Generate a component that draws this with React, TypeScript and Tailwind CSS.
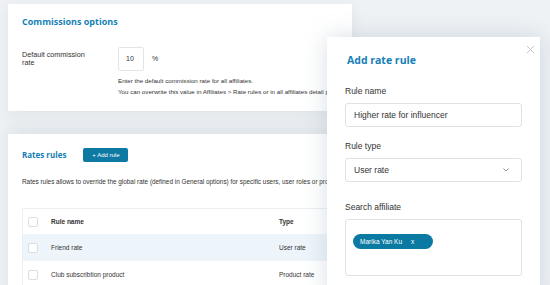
import React from "react";

const sans = "font-['Liberation_Sans',Arial,sans-serif]";
const head = "font-['Open_Sans',sans-serif] font-bold text-[#1580b6]";

type Rule = { name: string; type: string; active?: boolean };

const rules: Rule[] = [
  { name: "Friend rate", type: "User rate", active: true },
  { name: "Club subscribtion product", type: "Product rate" },
];

function Checkbox() {
  return <span className="block w-[10px] h-[10px] rounded-[2px] border border-[#d9dee3] bg-white" />;
}

function CommissionsCard() {
  return (
    <div className="ml-[8px] mt-[4px] w-[344px] h-[107px] bg-white px-[14px] pt-[11px] shadow-[0_4px_14px_rgba(150,165,180,0.18)]">
      <h2 className={`${head} text-[9px] leading-[14px]`}>Commissions options</h2>
      <div className="flex items-start mt-[18px]">
        <p className="w-[96px] pt-[4px] text-[7.2px] leading-[8px] text-[#333]">
          Default commission
          <br />
          rate
        </p>
        <div className="w-[26px] h-[24px] border border-[#e1e5e9] rounded-[2px] flex items-center pl-[7px] text-[7px] text-[#333]">
          10
        </div>
        <span className="ml-[8px] self-center text-[7px] text-[#333]">%</span>
      </div>
      <div className="ml-[96px] mt-[4px] text-[6.2px] leading-[11px] text-[#333] whitespace-nowrap">
        <p>Enter the default commission rate for all affiliates.</p>
        <p>You can overwrite this value in Affiliates &gt; Rate rules or in all affiliates detail page.</p>
      </div>
    </div>
  );
}

function RatesCard() {
  return (
    <div className="ml-[8px] mt-[23px] w-[360px] h-[170px] bg-white px-[14px] pt-[14px] shadow-[0_-6px_16px_rgba(150,165,180,0.2)]">
      <div className="flex items-center">
        <h3 className={`${head} text-[8px] leading-[14px]`}>Rates rules</h3>
        <button className="ml-[17px] w-[45px] h-[14px] rounded-[2px] bg-[#0e7aa3] text-white text-[6px] leading-[14px]">
          + Add rule
        </button>
      </div>
      <p className="mt-[16px] text-[6.4px] leading-[8px] text-[#333] whitespace-nowrap">
        Rates rules allows to override the global rate (defined in General options) for specific users, user roles or products.
      </p>
      <div className="mt-[22px] border border-[#edf0f2] text-[6.5px] text-[#333]">
        <div className="flex items-center h-[25px]">
          <div className="w-[28px] pl-[5px]">
            <Checkbox />
          </div>
          <span className="w-[228px] font-bold">Rule name</span>
          <span className="font-bold">Type</span>
        </div>
        {rules.map((r) => (
          <div key={r.name} className={`flex items-center h-[27px] ${r.active ? "bg-[#edf5fa]" : "bg-white"}`}>
            <div className="w-[28px] pl-[5px]">
              <Checkbox />
            </div>
            <span className="w-[228px]">{r.name}</span>
            <span>{r.type}</span>
          </div>
        ))}
      </div>
    </div>
  );
}

function RuleModal() {
  return (
    <div className="absolute left-[327px] top-[37px] w-[213px] h-[260px] bg-white px-[18px] pt-[16px] shadow-[0_0_22px_rgba(120,140,160,0.28)]">
      <svg className="absolute right-[5px] top-[8px]" width="9" height="9" viewBox="0 0 9 9">
        <path d="M1 1L8 8M8 1L1 8" stroke="#c3c8cc" strokeWidth="1" />
      </svg>
      <h2 className={`${head} ml-[2px] text-[10.5px] leading-[15px]`}>Add rate rule</h2>

      <label className="block mt-[18px] text-[8.5px] leading-[10px] text-[#333]">Rule name</label>
      <div className="mt-[7px] h-[24px] border border-[#dde2e6] rounded-[3px] flex items-center pl-[8px] text-[8.5px] text-[#333]">
        Higher rate for influencer
      </div>

      <label className="block mt-[14px] text-[8.5px] leading-[10px] text-[#333]">Rule type</label>
      <div className="mt-[7px] h-[24px] border border-[#dde2e6] rounded-[3px] flex items-center justify-between pl-[8px] pr-[12px] text-[8.5px] text-[#333]">
        <span>User rate</span>
        <svg width="6" height="4" viewBox="0 0 6 4">
          <path d="M0.5 0.5L3 3L5.5 0.5" fill="none" stroke="#777" strokeWidth="0.8" />
        </svg>
      </div>

      <label className="block mt-[20px] text-[8.5px] leading-[10px] text-[#333]">Search affiliate</label>
      <div className="mt-[7px] h-[57px] border border-[#dde2e6] rounded-[3px] p-[7px]">
        <span className="inline-flex items-center gap-[9px] h-[15px] w-[80px] rounded-full bg-[#0b7aa3] pl-[7px] text-white text-[6.5px]">
          Marika Yan Ku
          <span>x</span>
        </span>
      </div>
    </div>
  );
}

export default function App() {
  return (
    <div className={`${sans} relative w-[550px] h-[285px] overflow-hidden bg-[#eff2f5]`}>
      <CommissionsCard />
      <RatesCard />
      <RuleModal />
    </div>
  );
}
